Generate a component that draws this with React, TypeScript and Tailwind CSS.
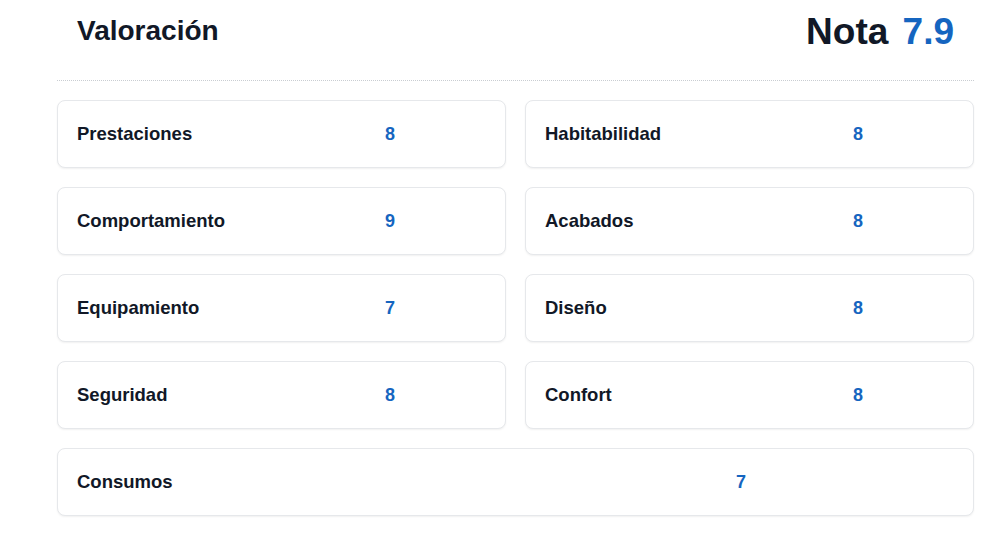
import React from "react";

const items: [string, number][] = [
  ["Prestaciones", 8],
  ["Habitabilidad", 8],
  ["Comportamiento", 9],
  ["Acabados", 8],
  ["Equipamiento", 7],
  ["Diseño", 8],
  ["Seguridad", 8],
  ["Confort", 8],
];

function Card({ label, value, full }: { label: string; value: number; full?: boolean }) {
  return (
    <div
      className={`flex h-[68px] items-center rounded-lg border border-[#e6e8eb] bg-white pl-[19px] pr-5 shadow-[0_1px_2px_rgba(0,0,0,0.06)] ${full ? "col-span-2" : ""}`}
    >
      <div className="flex-1 text-[18.5px] font-bold text-[#111827]">{label}</div>
      <div className="flex-1 pl-7 text-center text-[18px] font-bold text-[#1565c0]">{value}</div>
    </div>
  );
}

export default function App() {
  return (
    <div className="min-h-[539px] bg-white" style={{ fontFamily: '"Liberation Sans", Arial, sans-serif' }}>
      <div className="mx-[57px] w-[917px]">
        <div className="flex h-[62px] items-center justify-between px-5">
          <h2 className="text-[28px] font-bold text-[#111827]">Valoración</h2>
          <div className="text-[37px] font-bold leading-none text-[#111827]">
            Nota <span className="ml-1 text-[#1565c0]">7.9</span>
          </div>
        </div>
        <div className="mt-[18px] border-t border-dotted border-[#c9cdd2]" />
        <div className="mt-[19px] grid grid-cols-[449px_449px] gap-x-[19px] gap-y-[19px]">
          {items.map(([l, v]) => (
            <Card key={l} label={l} value={v} />
          ))}
          <Card label="Consumos" value={7} full />
        </div>
      </div>
    </div>
  );
}
